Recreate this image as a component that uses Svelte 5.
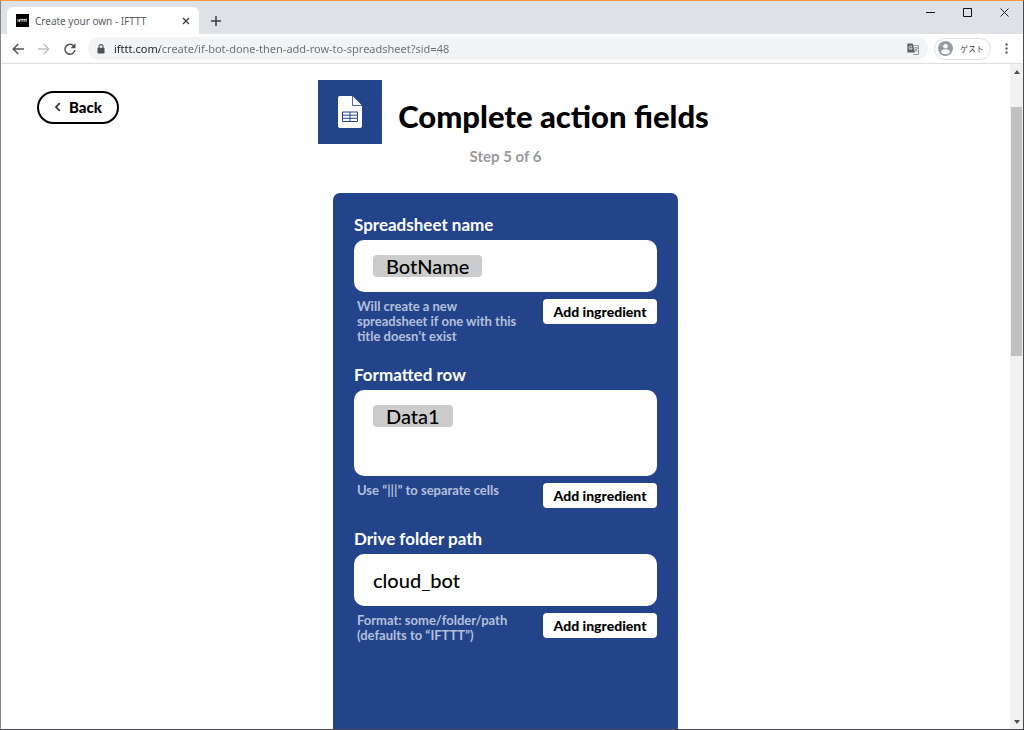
<script lang="ts">
	type Field = {
		id: string;
		label: string;
		value: string;
		hint: string;
		token?: boolean;
		tall?: boolean;
	};

	let url = $state('ifttt.com/create/if-bot-done-then-add-row-to-spreadsheet?sid=48');

	let fields = $state<Field[]>([
		{
			id: 'spreadsheet-name',
			label: 'Spreadsheet name',
			value: 'BotName',
			hint: 'Will create a new spreadsheet if one with this title doesn’t exist',
			token: true
		},
		{
			id: 'formatted-row',
			label: 'Formatted row',
			value: 'Data1',
			hint: 'Use “|||” to separate cells',
			token: true,
			tall: true
		},
		{
			id: 'folder-path',
			label: 'Drive folder path',
			value: 'cloud_bot',
			hint: 'Format: some/folder/path (defaults to “IFTTT”)'
		}
	]);
</script>

<div class="window">
	<div class="tab-strip">
		<div class="tab">
			<svg class="favicon" viewBox="0 0 13 13" aria-hidden="true">
				<rect width="13" height="13" fill="#000" />
				<path d="M2 5v3M3.5 8V5.4h1.4M3.5 6.6h1.2M5.2 5.4h1.8M6.1 5v3M7.2 5.4H9M8.1 5v3M9.2 5.4H11M10.1 5v3" stroke="#fff" stroke-width=".8" fill="none" />
			</svg>
			<span class="tab-title">Create your own - IFTTT</span>
			<button class="icon-btn" aria-label="Close tab">
				<svg width="8" height="8" viewBox="0 0 8 8"><path d="M1 1l6 6M7 1L1 7" stroke="#3c4043" stroke-width="1.4" /></svg>
			</button>
		</div>
		<button class="icon-btn new-tab" aria-label="New tab">
			<svg width="10" height="10" viewBox="0 0 10 10"><path d="M5 0v10M0 5h10" stroke="#3c4043" stroke-width="1.5" /></svg>
		</button>
		<div class="window-controls">
			<button class="icon-btn" aria-label="Minimize">
				<svg width="9" height="9" viewBox="0 0 9 9"><path d="M0 4.5h9" stroke="#111" /></svg>
			</button>
			<button class="icon-btn" aria-label="Maximize">
				<svg width="9" height="9" viewBox="0 0 9 9"><path d="M.5.5h8v8h-8z" fill="none" stroke="#111" /></svg>
			</button>
			<button class="icon-btn" aria-label="Close">
				<svg width="9" height="9" viewBox="0 0 9 9"><path d="M.5.5l8 8M8.5.5l-8 8" stroke="#222" /></svg>
			</button>
		</div>
	</div>

	<div class="toolbar">
		<nav class="nav-buttons">
			<button class="icon-btn" aria-label="Go back">
				<svg width="12" height="12" viewBox="0 0 12 12"><path d="M12 6H1.2M6.2 1L1.2 6l5 5" fill="none" stroke="#4d5156" stroke-width="1.4" /></svg>
			</button>
			<button class="icon-btn" aria-label="Go forward">
				<svg width="12" height="12" viewBox="0 0 12 12"><path d="M0 6h10.8M5.8 1l5 5-5 5" fill="none" stroke="#bcbfc3" stroke-width="1.4" /></svg>
			</button>
			<button class="icon-btn" aria-label="Reload">
				<svg width="12" height="12" viewBox="0 0 12 12">
					<path d="M10.2 3.4A5 5 0 1 0 11 7" fill="none" stroke="#4d5156" stroke-width="1.5" />
					<path d="M11.5.3v5h-5z" fill="#4d5156" />
				</svg>
			</button>
		</nav>
		<div class="address-bar">
			<svg width="8" height="10" viewBox="0 0 8 10" aria-hidden="true">
				<path d="M2 4V2.6a2 2 0 0 1 4 0V4" fill="none" stroke="#4d5156" stroke-width="1.1" />
				<rect x=".5" y="3.7" width="7" height="5.8" rx=".7" fill="#4d5156" />
			</svg>
			<input class="url" type="text" aria-label="Address" bind:value={url} />
			<button class="icon-btn" aria-label="Translate this page">
				<svg width="12" height="12" viewBox="0 0 12 12">
					<path d="M5 2.5h6.5v9H6.2" fill="#f1f3f4" stroke="#80868b" stroke-width=".8" />
					<path d="M.3.5h5.4l2.3 9H.3z" fill="#5f6368" />
					<path d="M5 3.8A1.6 1.6 0 1 0 5.2 5.1H3.8" fill="none" stroke="#fff" stroke-width=".8" />
					<path d="M7.2 4.8h3.6M9 4v.8M10.2 4.8c-.3 1.8-1.2 3-2.2 3.8M8 6c.5 1.2 1.3 2 2.5 2.8" fill="none" stroke="#70757a" stroke-width=".7" />
				</svg>
			</button>
		</div>
		<button class="profile">
			<svg width="15" height="15" viewBox="0 0 15 15" aria-hidden="true">
				<circle cx="7.5" cy="7.5" r="7.5" fill="#959ba3" />
				<circle cx="7.5" cy="5.2" r="2.3" fill="#fff" />
				<path d="M3 11.2c0-2 2.3-2.9 4.5-2.9s4.5.9 4.5 2.9c-1 1.3-2.7 2-4.5 2s-3.5-.7-4.5-2z" fill="#fff" />
			</svg>
			<span>ゲスト</span>
		</button>
		<button class="icon-btn menu" aria-label="Menu">
			<svg width="3" height="11" viewBox="0 0 3 11" fill="#5f6368">
				<circle cx="1.5" cy="1.5" r="1.2" />
				<circle cx="1.5" cy="5.5" r="1.2" />
				<circle cx="1.5" cy="9.5" r="1.2" />
			</svg>
		</button>
	</div>

	<div class="viewport">
		<main class="page">
			<header class="page-header">
				<a href="#back" class="back-link">
					<svg width="7" height="10" viewBox="0 0 7 10" aria-hidden="true"><path d="M5.8 1.2L2 5l3.8 3.8" fill="none" stroke="#333" stroke-width="1.7" /></svg>
					Back
				</a>
				<div class="heading">
					<svg class="service-icon" width="64" height="64" viewBox="0 0 64 64" aria-hidden="true">
						<rect width="64" height="64" fill="#23448b" />
						<path d="M22 16h12.5L44 25.5V46a2 2 0 0 1-2 2H22a2 2 0 0 1-2-2V18a2 2 0 0 1 2-2z" fill="#fff" />
						<path d="M34.5 16v9.5H44" fill="none" stroke="#23448b" stroke-width=".8" />
						<path d="M24.5 32h15v9.5h-15zM24.5 35.2h15M24.5 38.3h15M32 32v9.5" fill="none" stroke="#23448b" />
					</svg>
					<h1>Complete action fields</h1>
				</div>
			</header>
			<p class="step">Step 5 of 6</p>

			<form class="card" onsubmit={(e) => e.preventDefault()}>
				{#each fields as field (field.id)}
					<div class="field">
						<label for={field.id}>{field.label}</label>
						<div class="box" class:tall={field.tall}>
							<input id={field.id} class:token={field.token} type="text" bind:value={field.value} />
						</div>
						<div class="field-footer">
							<p class="hint">{field.hint}</p>
							<button type="button" class="add-btn">Add ingredient</button>
						</div>
					</div>
				{/each}
			</form>
		</main>

		<div class="scrollbar">
			<button class="icon-btn" aria-label="Scroll up">
				<svg width="6" height="4" viewBox="0 0 6 4"><path d="M0 4l3-4 3 4z" fill="#505050" /></svg>
			</button>
			<div class="track"><div class="thumb"></div></div>
			<button class="icon-btn" aria-label="Scroll down">
				<svg width="6" height="4" viewBox="0 0 6 4"><path d="M0 0l3 4 3-4z" fill="#505050" /></svg>
			</button>
		</div>
	</div>
</div>

<style>
	:global(body) {
		margin: 0;
	}

	.window {
		box-sizing: border-box;
		height: 100vh;
		display: flex;
		flex-direction: column;
		border: 1px solid #4a4a4c;
		border-top-color: #f5993a;
		border-left-color: #85868a;
		background: #fff;
		overflow: hidden;
		font-family: 'Noto Sans', 'Noto Sans CJK JP', sans-serif;
	}

	button,
	input {
		font: inherit;
		border: none;
		margin: 0;
	}

	.icon-btn {
		display: flex;
		align-items: center;
		justify-content: center;
		padding: 0;
		background: none;
	}

	/* Browser chrome */
	.tab-strip {
		display: flex;
		align-items: flex-end;
		height: 33px;
		flex-shrink: 0;
		padding-left: 6px;
		background: #dee1e6;
	}

	.tab {
		box-sizing: border-box;
		display: flex;
		align-items: center;
		width: 192px;
		height: 27px;
		padding: 0 9px;
		border-radius: 6px 6px 0 0;
		background: #fff;
	}

	.favicon {
		width: 13px;
		height: 13px;
		margin-right: 6px;
	}

	.tab-title {
		flex: 1;
		font-size: 10px;
		white-space: nowrap;
		color: #5b5e63;
	}

	.new-tab {
		width: 34px;
		height: 27px;
	}

	.window-controls {
		display: flex;
		align-self: flex-start;
		margin-left: auto;
	}

	.window-controls .icon-btn {
		width: 37px;
		height: 22px;
	}

	.toolbar {
		display: flex;
		align-items: center;
		flex-shrink: 0;
		height: 29px;
		padding: 0 11px;
		border-bottom: 1px solid #dcdee1;
	}

	.nav-buttons {
		display: flex;
		gap: 14px;
		margin-right: 12px;
	}

	.address-bar {
		display: flex;
		align-items: center;
		flex: 1;
		height: 23px;
		padding: 0 9px;
		border-radius: 12px;
		background: #f1f3f4;
	}

	/* host name is darker than the rest of the address */
	.url {
		flex: 1;
		min-width: 0;
		padding: 0 9px;
		font-size: 11px;
		line-height: 20px;
		color: #6b6e72;
		background: linear-gradient(to right, #202124 55px, #6b6e72 55px);
		background-clip: text;
		-webkit-text-fill-color: transparent;
	}

	.profile {
		display: flex;
		align-items: center;
		gap: 7px;
		height: 22px;
		margin-left: 6px;
		padding: 0 6px 0 3px;
		border: 1px solid #dfe1e5;
		border-radius: 11px;
		background: #fff;
		font-size: 8px;
		color: #3c4043;
	}

	.menu {
		width: 12px;
		margin-left: 9px;
	}

	/* Page */
	.viewport {
		display: flex;
		flex: 1;
		min-height: 0;
	}

	.page {
		flex: 1;
		overflow: hidden;
		font-family: Lato, 'Open Sans', sans-serif;
	}

	.page-header {
		display: grid;
		grid-template-columns: 1fr auto 1fr;
		align-items: start;
		padding: 16px 36px 0;
	}

	.back-link {
		box-sizing: border-box;
		display: flex;
		align-items: center;
		justify-content: center;
		gap: 8px;
		justify-self: start;
		width: 82px;
		height: 33px;
		margin-top: 11px;
		padding-bottom: 1px;
		border: 2px solid #000;
		border-radius: 17px;
		font-size: 15px;
		font-weight: 900;
		color: #000;
		text-decoration: none;
	}

	.heading {
		display: flex;
		gap: 16px;
		padding-left: 16px;
	}

	h1 {
		margin: 17px 0 0;
		font-size: 31px;
		line-height: 38px;
		font-weight: 900;
		color: #000;
	}

	.step {
		margin: 2px 0 0;
		font-size: 15px;
		line-height: 20px;
		font-weight: 700;
		text-align: center;
		color: #999;
	}

	.card {
		box-sizing: border-box;
		display: flex;
		flex-direction: column;
		gap: 21px;
		width: 345px;
		min-height: 640px;
		margin: 27px auto 0;
		padding: 22px 21px;
		border-radius: 7px;
		background: #23448b;
	}

	label {
		display: block;
		margin-bottom: 5px;
		font-size: 17px;
		line-height: 20px;
		font-weight: 700;
		color: #fff;
	}

	.box {
		box-sizing: border-box;
		height: 52px;
		padding: 15px 19px;
		border-radius: 10px;
		background: #fff;
	}

	.box.tall {
		height: 86px;
	}

	.box input {
		display: block;
		width: 100%;
		height: 22px;
		padding: 0;
		font-size: 20px;
		line-height: 22px;
		font-weight: 500;
		color: #000;
		background: none;
	}

	.box input.token {
		width: auto;
		field-sizing: content;
		padding: 0 13px;
		border-radius: 4px;
		background: #ccc;
	}

	.field-footer {
		display: flex;
		align-items: flex-start;
		justify-content: space-between;
		gap: 16px;
		padding: 7px 0 0 3px;
	}

	.hint {
		max-width: 166px;
		margin: 0;
		font-size: 13px;
		line-height: 15px;
		font-weight: 700;
		color: #b4c0da;
	}

	.add-btn {
		flex-shrink: 0;
		width: 114px;
		height: 25px;
		padding: 0;
		border-radius: 4px;
		font-size: 14px;
		font-weight: 900;
		color: #000;
		background: #fff;
	}

	/* Scrollbar */
	.scrollbar {
		display: flex;
		flex-direction: column;
		width: 13px;
		background: #f1f1f1;
	}

	.scrollbar .icon-btn {
		height: 15px;
	}

	.track {
		flex: 1;
		padding: 28px 1px 0;
	}

	.thumb {
		height: 41%;
		background: #c1c1c1;
	}
</style>
